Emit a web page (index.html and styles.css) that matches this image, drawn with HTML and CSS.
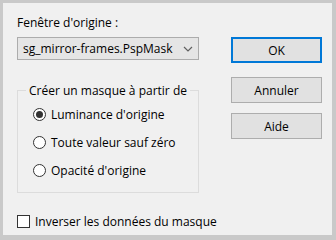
FILE: index.html
```html
<!DOCTYPE html>
<html lang="fr">
<head>
  <meta charset="UTF-8">
  <title>Masque</title>
  <link rel="stylesheet" href="styles.css">
</head>
<body>
  <div class="window">
    <div class="main">
      <div class="left">
        <div class="label">Fenêtre d'origine :</div>
        <div class="combo">
          <span class="combo-text">sg_mirror-frames.PspMask</span>
          <svg class="chevron" width="10" height="6" viewBox="0 0 10 6">
            <path d="M1 1 L5 5 L9 1" fill="none" stroke="#606060" stroke-width="1.2"/>
          </svg>
        </div>
        <fieldset class="group">
          <legend>Créer un masque à partir de</legend>
          <div class="radio-row">
            <span class="radio checked"></span>
            <span>Luminance d'origine</span>
          </div>
          <div class="radio-row">
            <span class="radio"></span>
            <span>Toute valeur sauf zéro</span>
          </div>
          <div class="radio-row">
            <span class="radio"></span>
            <span>Opacité d'origine</span>
          </div>
        </fieldset>
      </div>
      <div class="right">
        <button class="btn default-btn">OK</button>
        <button class="btn cancel-btn">Annuler</button>
        <button class="btn help-btn">Aide</button>
      </div>
    </div>
    <div class="check-row">
      <span class="checkbox"></span>
      <span>Inverser les données du masque</span>
    </div>
  </div>
</body>
</html>
```

FILE: styles.css
```css
* {
  margin: 0;
  padding: 0;
  box-sizing: border-box;
}

body {
  width: 336px;
  height: 240px;
  font-family: "Open Sans", "Liberation Sans", sans-serif;
  font-size: 12px;
  line-height: 15px;
  color: #000;
  background: #c9c9c9;
}

.window {
  width: 336px;
  height: 240px;
  background: #f0f0f0;
  border-style: solid;
  border-color: #c9c9c9;
  border-width: 3px 4px 5px 3px;
  padding: 12px 10px 0 14px;
}

.main {
  display: flex;
  justify-content: space-between;
}

.left {
  width: 182px;
}

.label {
  height: 15px;
}

.combo {
  margin-top: 7px;
  height: 23px;
  border: 1px solid #acacac;
  background: #e5e5e5;
  display: flex;
  align-items: center;
  justify-content: space-between;
  padding: 0 5px 0 5px;
}

.chevron {
  margin-top: 1px;
}

.group {
  margin-top: 23px;
  height: 110px;
  border: 1px solid #dcdcdc;
  padding: 2px 0 0 15px;
}

.group legend {
  margin-left: -7px;
  padding: 0 3px;
}

.radio-row {
  display: flex;
  align-items: center;
  height: 28px;
  gap: 5px;
}

.radio {
  width: 13px;
  height: 13px;
  border: 1px solid #333;
  border-radius: 50%;
  background: #fff;
  display: flex;
  align-items: center;
  justify-content: center;
}

.radio.checked::after {
  content: "";
  width: 7px;
  height: 7px;
  border-radius: 50%;
  background: #333;
}

.right {
  width: 91px;
  padding-top: 22px;
  display: flex;
  flex-direction: column;
}

.btn {
  height: 26px;
  font-family: inherit;
  font-size: 12px;
  color: #000;
  background: #e1e1e1;
  border: 1px solid #adadad;
}

.default-btn {
  border: 2px solid #0078d7;
}

.cancel-btn {
  margin-top: 14px;
}

.help-btn {
  margin-top: 10px;
}

.check-row {
  margin-top: 21px;
  display: flex;
  align-items: center;
  gap: 5px;
}

.checkbox {
  width: 13px;
  height: 13px;
  border: 1px solid #333;
  background: #fff;
}
```
